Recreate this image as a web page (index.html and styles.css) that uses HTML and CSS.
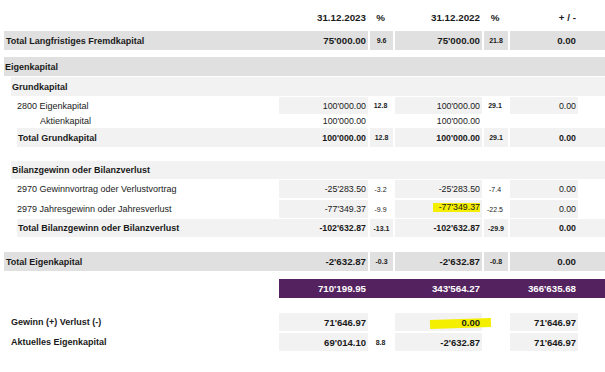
FILE: index.html
```html
<!DOCTYPE html>
<html lang="de">
<head>
<meta charset="utf-8">
<title>Bilanz Eigenkapital</title>
<link rel="stylesheet" href="styles.css">
</head>
<body>
<div class="sheet">
  <div class="row head">
    <div class="c lab"></div>
    <div class="c amt">31.12.2023</div>
    <div class="c pct">%</div>
    <div class="c amt">31.12.2022</div>
    <div class="c pct">%</div>
    <div class="c amt">+ / -</div>
    <div class="c"></div>
  </div>

  <div class="row big dark r-tlf">
    <div class="c lab">Total Langfristiges Fremdkapital</div>
    <div class="c amt">75'000.00</div>
    <div class="c pct s">9.6</div>
    <div class="c amt s">75'000.00</div>
    <div class="c pct s">21.8</div>
    <div class="c amt s">0.00</div>
    <div class="c"></div>
  </div>

  <div class="row dark full r-ek">
    <div class="c lab">Eigenkapital</div>
  </div>

  <div class="row light full r-gk">
    <div class="c lab">Grundkapital</div>
  </div>

  <div class="row detail r-2800">
    <div class="c lab">2800 Eigenkapital</div>
    <div class="c amt g">100'000.00</div>
    <div class="c pct b">12.8</div>
    <div class="c amt g s">100'000.00</div>
    <div class="c pct b">29.1</div>
    <div class="c amt g s">0.00</div>
    <div class="c"></div>
  </div>

  <div class="row detail r-aktien">
    <div class="c lab">Aktienkapital</div>
    <div class="c amt">100'000.00</div>
    <div class="c pct"></div>
    <div class="c amt">100'000.00</div>
    <div class="c pct"></div>
    <div class="c amt"></div>
    <div class="c"></div>
  </div>

  <div class="row sub light r-tgk">
    <div class="c lab">Total Grundkapital</div>
    <div class="c amt">100'000.00</div>
    <div class="c pct s">12.8</div>
    <div class="c amt s">100'000.00</div>
    <div class="c pct s">29.1</div>
    <div class="c amt s">0.00</div>
    <div class="c"></div>
  </div>

  <div class="row light full r-bil">
    <div class="c lab">Bilanzgewinn oder Bilanzverlust</div>
  </div>

  <div class="row detail r-2970">
    <div class="c lab">2970 Gewinnvortrag oder Verlustvortrag</div>
    <div class="c amt g">-25'283.50</div>
    <div class="c pct">-3.2</div>
    <div class="c amt g s">-25'283.50</div>
    <div class="c pct">-7.4</div>
    <div class="c amt g s">0.00</div>
    <div class="c"></div>
  </div>

  <div class="row detail r-2979">
    <div class="c lab">2979 Jahresgewinn oder Jahresverlust</div>
    <div class="c amt g">-77'349.37</div>
    <div class="c pct">-9.9</div>
    <div class="c amt g s"><span class="hl">-77'349.37</span></div>
    <div class="c pct">-22.5</div>
    <div class="c amt g s">0.00</div>
    <div class="c"></div>
  </div>

  <div class="row sub light r-tbil">
    <div class="c lab">Total Bilanzgewinn oder Bilanzverlust</div>
    <div class="c amt">-102'632.87</div>
    <div class="c pct s">-13.1</div>
    <div class="c amt s">-102'632.87</div>
    <div class="c pct s">-29.9</div>
    <div class="c amt s">0.00</div>
    <div class="c"></div>
  </div>

  <div class="row big dark r-tek">
    <div class="c lab">Total Eigenkapital</div>
    <div class="c amt">-2'632.87</div>
    <div class="c pct s">-0.3</div>
    <div class="c amt s">-2'632.87</div>
    <div class="c pct s">-0.8</div>
    <div class="c amt s">0.00</div>
    <div class="c"></div>
  </div>

  <div class="row purple r-sum">
    <div class="c lab"></div>
    <div class="c amt p">710'199.95</div>
    <div class="c pct p"></div>
    <div class="c amt p">343'564.27</div>
    <div class="c pct p"></div>
    <div class="c amt p">366'635.68</div>
    <div class="c p"></div>
  </div>

  <div class="row foot r-gew">
    <div class="c lab">Gewinn (+) Verlust (-)</div>
    <div class="c amt g">71'646.97</div>
    <div class="c pct"></div>
    <div class="c amt g s marker"><span class="mk">0.00</span></div>
    <div class="c pct"></div>
    <div class="c amt g s">71'646.97</div>
    <div class="c"></div>
  </div>

  <div class="row foot r-akt">
    <div class="c lab">Aktuelles Eigenkapital</div>
    <div class="c amt g">69'014.10</div>
    <div class="c pct b">8.8</div>
    <div class="c amt g s">-2'632.87</div>
    <div class="c pct"></div>
    <div class="c amt g s">71'646.97</div>
    <div class="c"></div>
  </div>
</div>
</body>
</html>
```

FILE: styles.css
```css
* { box-sizing: border-box; }

html, body {
  margin: 0;
  padding: 0;
  background: #ffffff;
}

body {
  font-family: "Liberation Sans", Arial, sans-serif;
  color: #1a1a1a;
  width: 605px;
  height: 372px;
  overflow: hidden;
}

.sheet {
  display: flex;
  flex-direction: column;
  padding-top: 7px;
}

.row {
  display: grid;
  grid-template-columns: 1fr 89px 25px 89px 26px 70px 27px;
  align-items: stretch;
  height: 19px;
}

.c {
  display: flex;
  align-items: center;
  white-space: nowrap;
  overflow: visible;
}

.lab {
  font-size: 9px;
  font-weight: bold;
}

.amt {
  justify-content: flex-end;
  padding-right: 2px;
}

.pct {
  justify-content: center;
  font-size: 7px;
}

.s { border-left: 2px solid #ffffff; }

/* header */
.head {
  height: 20px;
  font-weight: bold;
  font-size: 9.8px;
}
.head .pct { font-size: 9.8px; }

/* row kinds */
.dark .c { background: #e0e0e0; }
.light .c { background: #f2f2f2; }
.full .lab { grid-column: 1 / -1; }

.big .amt { font-size: 9.7px; font-weight: bold; }
.big .pct { font-weight: bold; }
.sub .amt { font-size: 8.8px; font-weight: bold; }
.sub .pct { font-weight: bold; }

.detail .lab { font-weight: normal; padding-left: 17px; }
.detail .amt { font-size: 8.8px; }
.g { background: #f2f2f2; }
.b { font-weight: bold; }

.purple .p {
  background: #54225f;
  color: #ffffff;
}
.purple .amt { font-size: 9.7px; font-weight: bold; }

.foot .lab { padding-left: 11px; }
.foot .amt { font-size: 9.5px; font-weight: bold; }

/* vertical rhythm and indents */
.r-tlf { margin-top: 4px; margin-left: 4px; }
.r-tlf .lab { padding-left: 2px; }
.r-ek { margin-top: 7px; margin-left: 4px; }
.r-ek .lab { padding-left: 1px; }
.r-gk { margin-top: 1px; margin-left: 11px; }
.r-gk .lab { padding-left: 1px; }
.r-2800 { margin-top: 1px; height: 17px; }
.r-aktien { height: 13px; }
.r-aktien .lab { padding-left: 40px; }
.r-tgk { margin-top: 1px; margin-left: 17px; }
.r-tgk .lab { padding-left: 1px; }
.r-bil { margin-top: 14px; margin-left: 11px; height: 18px; }
.r-bil .lab { padding-left: 1px; }
.r-2970 { margin-top: 1px; height: 18px; }
.r-2979 { margin-top: 2px; height: 18px; }
.r-tbil { margin-top: 1px; margin-left: 17px; height: 18px; }
.r-tbil .lab { padding-left: 1px; }
.r-tek { margin-top: 15px; margin-left: 4px; }
.r-tek .lab { padding-left: 2px; }
.r-sum { margin-top: 8px; }
.r-gew { margin-top: 15px; height: 18px; }
.r-akt { margin-top: 2px; height: 18px; }

/* highlights */
.hl {
  background: #f4ee00;
  padding-left: 6px;
  line-height: 9px;
  margin-top: -3px;
}

.marker { position: relative; }
.marker::before {
  content: "";
  position: absolute;
  left: 35px;
  top: 6px;
  width: 61px;
  height: 9px;
  background: #f4ee00;
  transform: rotate(-2deg);
}
.mk { position: relative; }
```
